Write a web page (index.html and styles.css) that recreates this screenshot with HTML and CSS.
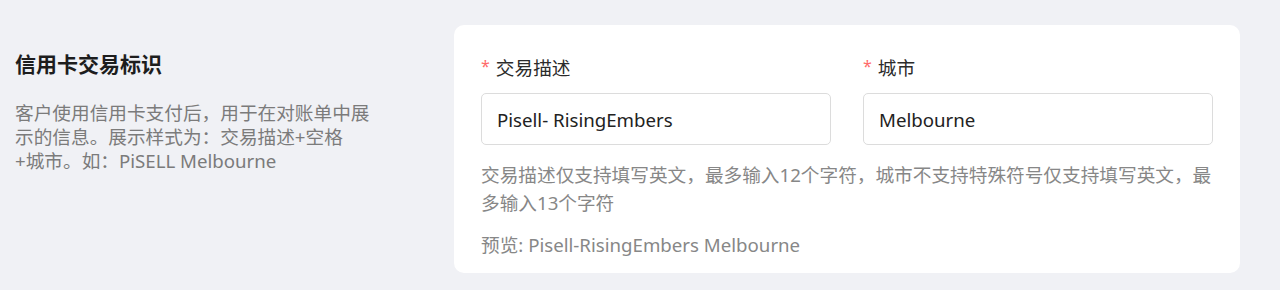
FILE: index.html
```html
<!DOCTYPE html>
<html lang="zh-CN">
<head>
<meta charset="utf-8">
<title>信用卡交易标识</title>
<link rel="stylesheet" href="styles.css">
</head>
<body>
<div class="page">
  <div class="intro">
    <h2 class="title">信用卡交易标识</h2>
    <p class="desc">客户使用信用卡支付后，用于在对账单中展示的信息。展示样式为：交易描述+空格+城市。如：PiSELL Melbourne</p>
  </div>
  <div class="card">
    <div class="fields">
      <div class="field">
        <label class="label"><span class="req">*</span>交易描述</label>
        <div class="input">Pisell- RisingEmbers</div>
      </div>
      <div class="field">
        <label class="label"><span class="req">*</span>城市</label>
        <div class="input">Melbourne</div>
      </div>
    </div>
    <p class="help">交易描述仅支持填写英文，最多输入12个字符，城市不支持特殊符号仅支持填写英文，最多输入13个字符</p>
    <p class="preview">预览: Pisell-RisingEmbers Melbourne</p>
  </div>
</div>
</body>
</html>
```

FILE: styles.css
```css
html, body {
  margin: 0;
  padding: 0;
  background: #f0f1f5;
}
body {
  font-family: "Noto Sans", "Noto Sans CJK SC", sans-serif;
  font-size: 18.67px;
}
.page {
  display: grid;
  grid-template-columns: 439px 786px;
  padding: 25px 0 0 15px;
}
.intro {
  padding-top: 25px;
}
.title {
  margin: 0;
  font-size: 21px;
  line-height: 28px;
  font-weight: 700;
  color: #1d1d1d;
}
.desc {
  margin: 23px 0 0;
  width: 356px;
  font-size: 18.67px;
  line-height: 24px;
  color: #7b7b7b;
}
.card {
  background: #fff;
  border-radius: 10px;
  padding: 29px 27px 14px;
}
.fields {
  display: grid;
  grid-template-columns: 350px 350px;
  column-gap: 32px;
}
.field {
  display: flex;
  flex-direction: column;
}
.label {
  line-height: 28px;
  color: #2b2b2b;
  margin-bottom: 11px;
  display: flex;
  align-items: center;
}
.req {
  color: #ff6b6b;
  font-size: 16px;
  margin-right: 6px;
  position: relative;
  top: -2px;
}
.input {
  box-sizing: border-box;
  height: 52px;
  border: 1px solid #dcdcdc;
  border-radius: 5px;
  padding: 0 15px;
  display: flex;
  align-items: center;
  color: #222;
}
.help {
  margin: 16px 0 0;
  line-height: 28px;
  color: #878787;
}
.preview {
  margin: 14px 0 0;
  line-height: 28px;
  color: #878787;
}
```
